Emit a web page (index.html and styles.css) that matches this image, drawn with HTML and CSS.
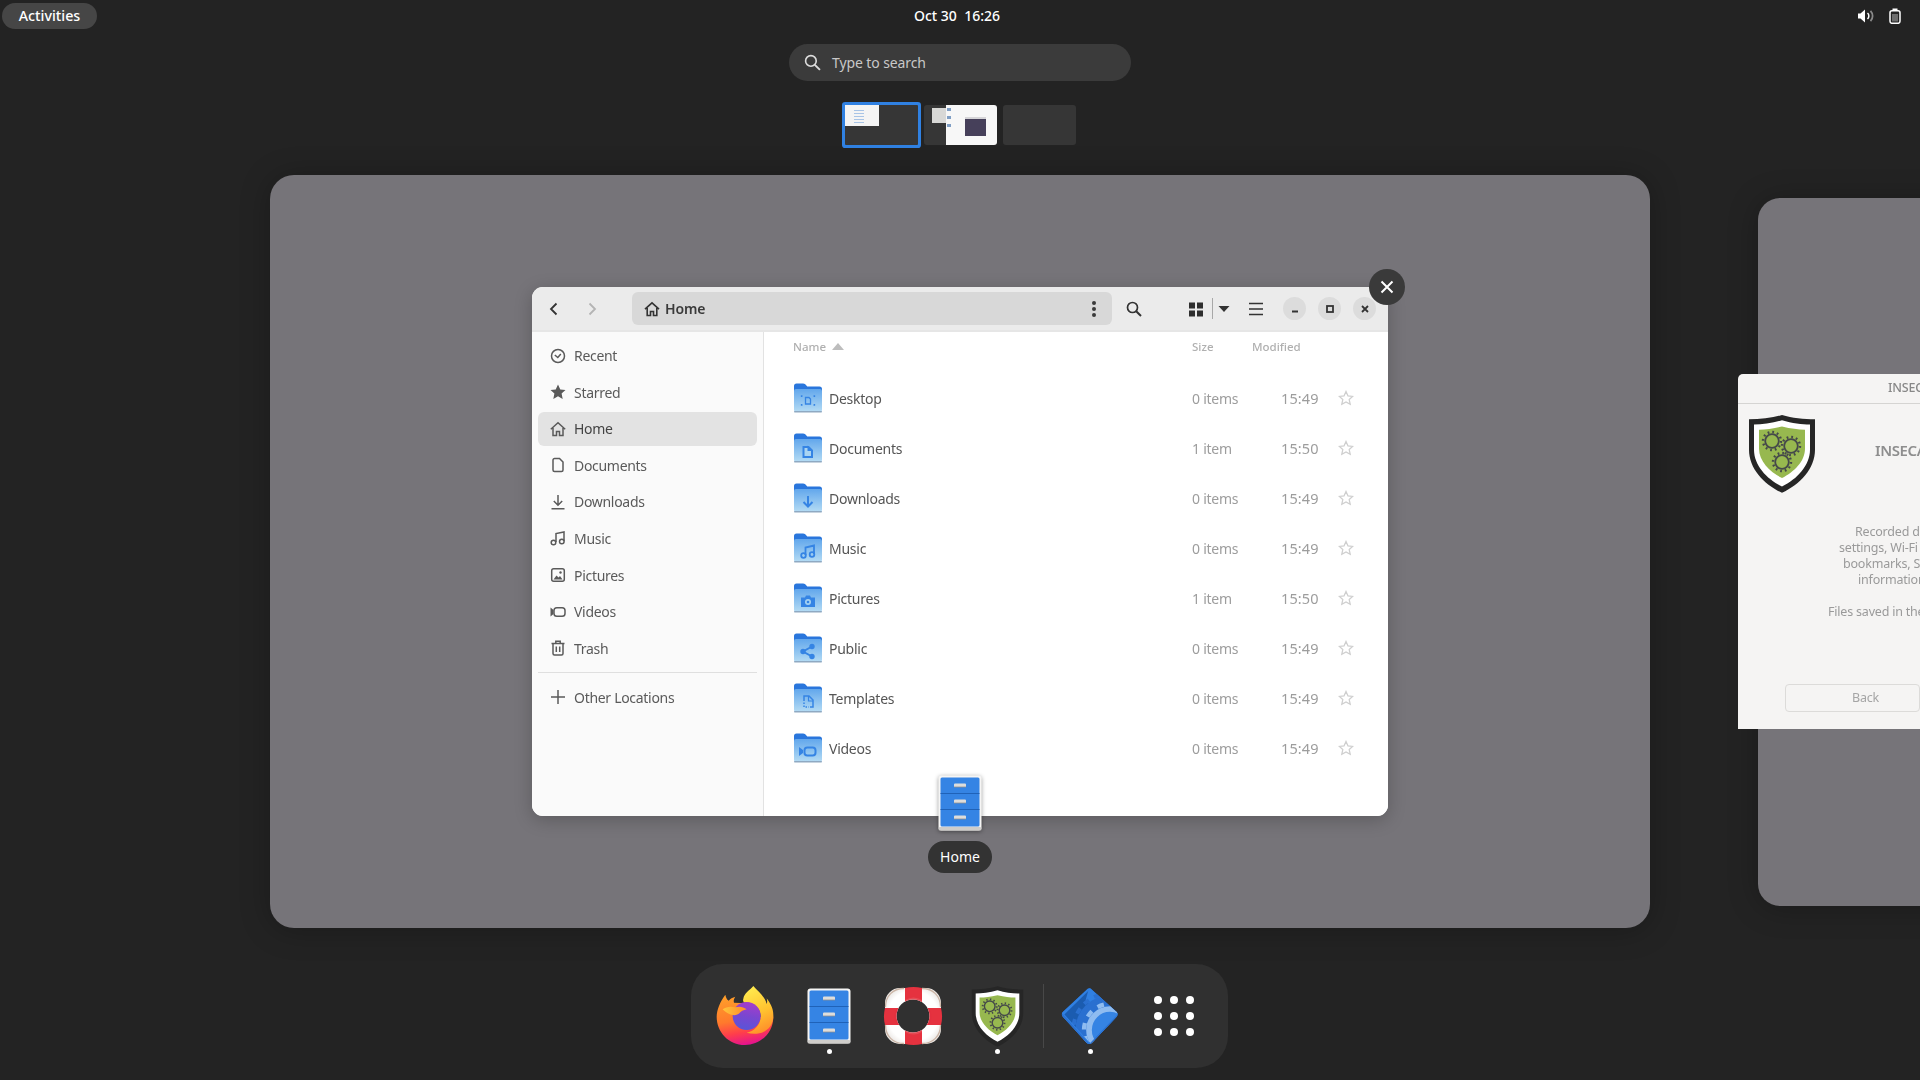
FILE: index.html
```html
<!DOCTYPE html>
<html lang="en">
<head>
<meta charset="utf-8">
<title>Activities overview</title>
<link rel="stylesheet" href="styles.css">
</head>
<body>
<svg class="defs" width="0" height="0" aria-hidden="true">
  <defs>
    <linearGradient id="fbody" x1="0" y1="0" x2="0" y2="1"><stop offset="0" stop-color="#62a7ec"/><stop offset="1" stop-color="#b5dcf4"/></linearGradient>
    <symbol id="folder" viewBox="0 0 32 32">
      <path d="M2 4a2.500 2.500 0 0 1 2.500-2.500h6.500c2 0 2.600 1 3.400 2l.8 1h12.300a2.500 2.500 0 0 1 2.500 2.500v6H2z" fill="#2a76dc"/>
      <rect x="2" y="7" width="28" height="23" rx="2" fill="url(#fbody)"/>
      <rect x="2" y="29" width="28" height="1.500" rx=".7" fill="#8fa9c2"/>
    </symbol>
    <symbol id="shield" viewBox="0 0 68 80">
      <g transform="scale(1 1.050)">
        <path d="M34 1 C44 4 56 5 67 5 V34 C67 52 52 67 34 75 C16 67 1 52 1 34 V5 C12 5 24 4 34 1Z" fill="#262626"/>
        <path d="M34 6 C44 9 54 10 62 10 V34 C62 49 49 62 34 69 C19 62 6 49 6 34 V10 C14 10 24 9 34 6Z" fill="#fff"/>
        <path d="M34 12 C43 14 50 15 57 15 V33 C57 45 46 55 34 61 C22 55 11 45 11 33 V15 C18 15 25 14 34 12Z" fill="#97b84f"/>
      </g>
      <g fill="none" stroke="#45494a">
        <circle cx="24" cy="27" r="6.800" stroke-width="1.800"/><circle cx="24" cy="27" r="9" stroke-width="2.400" stroke-dasharray="1.800 2.910"/>
        <circle cx="43" cy="32" r="6.800" stroke-width="1.800"/><circle cx="43" cy="32" r="9" stroke-width="2.400" stroke-dasharray="1.800 2.910"/>
        <circle cx="34" cy="48" r="6.800" stroke-width="1.800"/><circle cx="34" cy="48" r="9" stroke-width="2.400" stroke-dasharray="1.800 2.910"/>
      </g>
    </symbol>
    <symbol id="drawers" viewBox="0 0 44 56">
      <rect x=".5" y=".5" width="43" height="55" rx="3" fill="#f6f5f4"/>
      <rect x=".5" y="52" width="43" height="3.500" rx="1.500" fill="#cfcdca"/>
      <rect x="2.500" y="2.500" width="39" height="49" rx="1.500" fill="#3584e4"/>
      <path d="M2.500 18.500h39M2.500 34.500h39" stroke="#1f62b8" stroke-width="1"/>
      <path d="M16 12v-2.500a1 1 0 0 1 1-1h10a1 1 0 0 1 1 1V12zM16 28v-2.500a1 1 0 0 1 1-1h10a1 1 0 0 1 1 1V28zM16 44v-2.500a1 1 0 0 1 1-1h10a1 1 0 0 1 1 1V44z" fill="#dedddb"/>
      <path d="M16 12h12M16 28h12M16 44h12" stroke="#8f8f8f" stroke-width=".8"/>
    </symbol>
    <symbol id="star" viewBox="0 0 16 16">
      <path d="M8 1.500l2 4.400 4.700.5-3.500 3.200 1 4.700L8 11.900l-4.200 2.400 1-4.700L1.300 6.400 6 5.900z"/>
    </symbol>
  </defs>
</svg>

<div class="overview">
  <header class="topbar">
    <div class="activities">Activities</div>
    <div class="clock">Oct 30&nbsp;&nbsp;16:26</div>
    <div class="tray">
      <svg class="tray-icon" viewBox="0 0 16 16"><path d="M0 5.500h2.500L7 1.500v13L2.500 10.500H0z" fill="#fff"/><path d="M9.500 5a4 4 0 0 1 0 6" fill="none" stroke="#fff" stroke-width="1.500"/><path d="M12.500 2.800a7.500 7.500 0 0 1 0 10.400" fill="none" stroke="#8a8a8a" stroke-width="1.800"/></svg>
      <svg class="tray-icon" viewBox="0 0 16 16"><rect x="3" y="2.700" width="10" height="12.600" rx="2" fill="none" stroke="#fff" stroke-width="1.500"/><rect x="5.500" y=".5" width="5" height="2" fill="#fff"/><rect x="5" y="6" width="6" height="7.500" fill="#6d6d6d"/></svg>
    </div>
  </header>

  <div class="search">
    <svg class="search-icon" viewBox="0 0 16 16"><circle cx="6.500" cy="6.500" r="5" fill="none" stroke="#ddd" stroke-width="1.500"/><path d="M10.200 10.200L15 15" stroke="#ddd" stroke-width="1.800"/></svg>
    <span>Type to search</span>
  </div>

  <div class="thumbs">
    <div class="thumb active"><div class="mini-win"><i></i><i></i><i></i><i></i><i></i></div></div>
    <div class="thumb second">
      <div class="mini-dialog"></div>
      <div class="mini-page"><div class="mini-rail"><i></i><i></i><i></i></div><div class="mini-dark"></div></div>
    </div>
    <div class="thumb"></div>
  </div>

  <div class="spaces">
    <section class="workspace">
      <div class="window">
        <div class="headerbar">
          <svg class="hb-icon" viewBox="0 0 16 16"><path d="M10.500 2.500L5 8l5.500 5.500" fill="none" stroke="#333" stroke-width="1.800"/></svg>
          <svg class="hb-icon forward" viewBox="0 0 16 16"><path d="M5.500 2.500L11 8l-5.500 5.500" fill="none" stroke="#b4b4b4" stroke-width="1.800"/></svg>
          <div class="pathbar">
            <svg class="path-home" viewBox="0 0 16 16"><path d="M1 8.200L8 1.800l7 6.400M3.200 7v7.500h3.300v-4h3v4h3.300V7" fill="none" stroke="#333" stroke-width="1.600"/></svg>
            <b>Home</b>
            <span class="kebab"><i></i><i></i><i></i></span>
          </div>
          <svg class="hb-icon find" viewBox="0 0 16 16"><circle cx="6.500" cy="6.500" r="5" fill="none" stroke="#333" stroke-width="1.700"/><path d="M10.200 10.200L15 15" stroke="#333" stroke-width="2"/></svg>
          <svg class="hb-icon view" viewBox="0 0 16 16"><path d="M1 1.500h6v6H1zM9 1.500h6v6H9zM1 9.500h6v6H1zM9 9.500h6v6H9z" fill="#2e2e2e"/></svg>
          <span class="hb-sep"></span>
          <svg class="caret" viewBox="0 0 12 8"><path d="M.5 1h11L6 7z" fill="#333"/></svg>
          <svg class="hb-icon burger" viewBox="0 0 16 16"><path d="M1 2.500h14M1 8h14M1 13.500h14" stroke="#333" stroke-width="1.400"/></svg>
          <span class="wm"><svg viewBox="0 0 12 12"><path d="M3 8.500h6" stroke="#333" stroke-width="1.800"/></svg></span>
          <span class="wm"><svg viewBox="0 0 12 12"><rect x="3" y="3" width="6" height="6" fill="none" stroke="#333" stroke-width="1.800"/></svg></span>
          <span class="wm"><svg viewBox="0 0 12 12"><path d="M3 3l6 6M9 3l-6 6" stroke="#333" stroke-width="1.800"/></svg></span>
        </div>
        <div class="winbody">
          <nav class="sidebar">
            <div class="side-row"><svg viewBox="0 0 16 16"><circle cx="8" cy="8" r="6.500"/><path d="M4.800 7l3 2.500 3-3.500"/></svg>Recent</div>
            <div class="side-row"><svg viewBox="0 0 16 16"><path class="fill" d="M8 .5l2.300 5 5.200.6-3.900 3.500 1.100 5.400L8 12.200 3.300 15l1.100-5.400L.5 6.100l5.200-.6z"/></svg>Starred</div>
            <div class="side-row selected"><svg viewBox="0 0 16 16"><path d="M.8 8.200L8 1.800l7.200 6.400M3 7v7.500h3.500v-4h3v4H13V7"/></svg>Home</div>
            <div class="side-row"><svg viewBox="0 0 16 16"><path d="M4.500 1.500h5L13 5v8a1.500 1.500 0 0 1-1.500 1.500h-7A1.500 1.500 0 0 1 3 13V3a1.500 1.500 0 0 1 1.500-1.500z"/></svg>Documents</div>
            <div class="side-row"><svg viewBox="0 0 16 16"><path d="M8 1v10M3.800 7L8 11.200 12.200 7M1.500 14.700h13"/></svg>Downloads</div>
            <div class="side-row"><svg viewBox="0 0 16 16"><path d="M6 12V3.500l8-1.500v9"/><circle cx="3.500" cy="12.500" r="2.300"/><circle cx="11.800" cy="11.500" r="2.300"/></svg>Music</div>
            <div class="side-row"><svg viewBox="0 0 16 16"><rect x="1.700" y="1.700" width="12.600" height="12.600" rx="2"/><path class="fill" d="M3.500 12.500l3-4 2 2 1.500-1.500 2.500 3.500z"/><circle class="fill" cx="10.500" cy="5.500" r="1.200"/></svg>Pictures</div>
            <div class="side-row"><svg viewBox="0 0 16 16"><rect x="4" y="3.700" width="11" height="8.600" rx="2.800"/><path class="fill" d="M.5 3.500l3 2.500v4l-3 2.500z"/></svg>Videos</div>
            <div class="side-row"><svg viewBox="0 0 16 16"><path d="M1.500 3.500h13M5.800 3.500V1.300h4.400v2.200M3 3.500v10a1.500 1.500 0 0 0 1.500 1.500h7a1.500 1.500 0 0 0 1.500-1.500v-10M6.300 6.500v5.500M9.700 6.500v5.500"/></svg>Trash</div>
            <div class="side-sep"></div>
            <div class="side-row"><svg viewBox="0 0 16 16"><path d="M8 1v14M1 8h14"/></svg>Other Locations</div>
          </nav>
          <main class="files">
            <div class="file-head">
              <span class="name-head">Name<svg viewBox="0 0 12 7"><path d="M0 7L6 0l6 7z" fill="#bdbdbd"/></svg></span>
              <span>Size</span>
              <span>Modified</span>
            </div>
            <div class="file-row"><span class="ficon"><svg viewBox="0 0 32 32"><use href="#folder"/><path d="M9.500 15v-1h1M9.500 22v1h1M21.500 14h1v1M22.500 22v1h-1M13.500 15.500h3.500l1.500 1.500v5h-5z" fill="none" stroke="#3584e4" stroke-width="1.300"/></svg></span><span>Desktop</span><span class="dim">0 items</span><span class="time">15:49</span><svg class="star"><use href="#star"/></svg></div>
            <div class="file-row"><span class="ficon"><svg viewBox="0 0 32 32"><use href="#folder"/><path d="M11.500 15h5l3.500 3.500V25h-8.500z" fill="#a9d4f2" stroke="#3584e4" stroke-width="2"/><path d="M15.500 13.500l5.500 5.500h-5.500z" fill="#3584e4"/></svg></span><span>Documents</span><span class="dim">1 item</span><span class="time">15:50</span><svg class="star"><use href="#star"/></svg></div>
            <div class="file-row"><span class="ficon"><svg viewBox="0 0 32 32"><use href="#folder"/><path d="M16 14v10M11.500 20l4.500 4.500 4.500-4.500" fill="none" stroke="#3584e4" stroke-width="2"/></svg></span><span>Downloads</span><span class="dim">0 items</span><span class="time">15:49</span><svg class="star"><use href="#star"/></svg></div>
            <div class="file-row"><span class="ficon"><svg viewBox="0 0 32 32"><use href="#folder"/><path d="M13.500 23v-7.500l8.500-2V22" fill="none" stroke="#3584e4" stroke-width="1.800"/><circle cx="11.500" cy="23.500" r="2.300" fill="none" stroke="#3584e4" stroke-width="1.800"/><circle cx="20" cy="22.500" r="2.300" fill="none" stroke="#3584e4" stroke-width="1.800"/></svg></span><span>Music</span><span class="dim">0 items</span><span class="time">15:49</span><svg class="star"><use href="#star"/></svg></div>
            <div class="file-row"><span class="ficon"><svg viewBox="0 0 32 32"><use href="#folder"/><path d="M9 15.500h4l1-2h4l1 2h4V25H9z" fill="#3584e4"/><circle cx="16" cy="20" r="3" fill="#a5d2f2"/><circle cx="16" cy="20" r="1.300" fill="#3584e4"/></svg></span><span>Pictures</span><span class="dim">1 item</span><span class="time">15:50</span><svg class="star"><use href="#star"/></svg></div>
            <div class="file-row"><span class="ficon"><svg viewBox="0 0 32 32"><use href="#folder"/><path d="M20 14.500L11 19.500l9 5" fill="none" stroke="#3584e4" stroke-width="2"/><circle cx="20" cy="14.500" r="2.700" fill="#3584e4"/><circle cx="11" cy="19.500" r="2.700" fill="#3584e4"/><circle cx="20" cy="24.500" r="2.700" fill="#3584e4"/></svg></span><span>Public</span><span class="dim">0 items</span><span class="time">15:49</span><svg class="star"><use href="#star"/></svg></div>
            <div class="file-row"><span class="ficon"><svg viewBox="0 0 32 32"><use href="#folder"/><path d="M12 19v-5h5l4 4v7h-3" fill="none" stroke="#3584e4" stroke-width="1.500"/><path d="M16.500 14v5h4.500" fill="none" stroke="#3584e4" stroke-width="1.200"/><path d="M12 20.500v4.500h5" fill="none" stroke="#3584e4" stroke-width="1.500" stroke-dasharray="1.500 1.500"/></svg></span><span>Templates</span><span class="dim">0 items</span><span class="time">15:49</span><svg class="star"><use href="#star"/></svg></div>
            <div class="file-row"><span class="ficon"><svg viewBox="0 0 32 32"><use href="#folder"/><rect x="12.500" y="15.500" width="11" height="8" rx="2.800" fill="none" stroke="#3584e4" stroke-width="2"/><path d="M7 15l4 3v3l-4 3z" fill="#3584e4"/></svg></span><span>Videos</span><span class="dim">0 items</span><span class="time">15:49</span><svg class="star"><use href="#star"/></svg></div>
          </main>
        </div>
      </div>
      <div class="win-close"><svg viewBox="0 0 16 16"><path d="M2.500 2.500l11 11M13.500 2.500l-11 11" stroke="#fff" stroke-width="2"/></svg></div>
      <div class="tile"><svg viewBox="0 0 44 56"><use href="#drawers"/></svg></div>
      <div class="tile-label">Home</div>
    </section>

    <section class="workspace peek">
      <div class="dialog">
        <div class="dialog-title">INSECA installer</div>
        <div class="dialog-main">
          <svg class="dialog-shield" viewBox="0 0 68 80"><use href="#shield"/></svg>
          <div class="dialog-text">
            <div class="dialog-head">INSECA</div>
            <div class="para">
              <div class="l1">Recorded data</div>
              <div class="l2">settings, Wi-Fi passwords</div>
              <div class="l3">bookmarks, SSH keys</div>
              <div class="l4">information</div>
            </div>
            <div class="para">
              <div class="l5">Files saved in the</div>
              <div class="l6">Persistent</div>
            </div>
          </div>
        </div>
        <div class="dialog-btn">Back</div>
      </div>
    </section>
  </div>

  <footer class="dock">
    <div class="dock-item">
      <svg class="dock-icon" viewBox="15 18 180 180">
        <defs>
          <linearGradient id="ffa" x1=".3" y1="0" x2=".5" y2="1"><stop offset="0" stop-color="#ff9f2a"/><stop offset=".5" stop-color="#ff7a2c"/><stop offset=".75" stop-color="#ff3f4a"/><stop offset="1" stop-color="#e4128f"/></linearGradient>
          <linearGradient id="ffb" x1=".4" y1="0" x2=".7" y2="1"><stop offset="0" stop-color="#ffe94d"/><stop offset=".55" stop-color="#ffc22f"/><stop offset="1" stop-color="#ff8a2a"/></linearGradient>
          <linearGradient id="ffc" x1=".6" y1="0" x2=".4" y2="1"><stop offset="0" stop-color="#a63ccc"/><stop offset=".5" stop-color="#7a46d0"/><stop offset="1" stop-color="#5855d8"/></linearGradient>
          <linearGradient id="ffd" x1="0" y1="0" x2="1" y2="0"><stop offset="0" stop-color="#ffc53a"/><stop offset="1" stop-color="#ff8a2a"/></linearGradient>
        </defs>
        <path d="M46 44C48 52 50 58 56 62 60 56 68 52 76 50 72 56 70 62 72 68L110 70C135 60 150 90 150 110L190 110C190 160 150 195 105 195 55 195 20 155 20 110 20 90 30 65 46 44Z" fill="url(#ffa)"/>
        <path d="M130 18C120 30 102 40 100 56 98 62 100 66 104 68 130 66 152 85 152 110 152 135 130 155 110 158 150 170 192 150 190 105 190 85 180 68 170 55 172 62 172 68 170 72 165 50 145 35 130 18Z" fill="url(#ffb)"/>
        <circle cx="110" cy="108" r="42" fill="url(#ffc)"/>
        <path d="M38 88C48 80 62 78 76 82 88 78 100 80 110 88 100 90 92 94 88 100 80 108 60 110 38 88Z" fill="url(#ffd)"/>
      </svg>
    </div>
    <div class="dock-item running"><svg class="dock-files" viewBox="0 0 44 56"><use href="#drawers"/></svg></div>
    <div class="dock-item">
      <svg class="dock-icon" viewBox="0 0 60 60">
        <defs>
          <clipPath id="ringclip"><path clip-rule="evenodd" d="M17 2h26a15 15 0 0 1 15 15v26a15 15 0 0 1-15 15H17A15 15 0 0 1 2 43V17A15 15 0 0 1 17 2zM30 13.500a16.500 16.500 0 1 0 0 33 16.500 16.500 0 0 0 0-33z"/></clipPath>
          <radialGradient id="ringshade" cx=".5" cy=".5" r=".7"><stop offset=".6" stop-color="#fff"/><stop offset="1" stop-color="#cfc7c0"/></radialGradient>
        </defs>
        <g clip-path="url(#ringclip)">
          <rect x="0" y="0" width="60" height="60" fill="url(#ringshade)"/>
          <rect x="22" y="0" width="17" height="60" fill="#e64a54"/>
          <rect x="0" y="22" width="60" height="17" fill="#e3303f"/>
        </g>
        <path d="M21 2.500C10 2.500 2.500 10 2.500 21M39 2.500C50 2.500 57.500 10 57.500 21M21 57.500C10 57.500 2.500 50 2.500 39M39 57.500C50 57.500 57.500 50 57.500 39" fill="none" stroke="#cbb5a6" stroke-width="1.300"/>
        <path d="M22 2a12 3 0 0 1 17 0v12a16.500 16.500 0 0 0-17 0zM22 58a12 3 0 0 0 17 0V46a16.500 16.500 0 0 1-17 0zM2 22a3 12 0 0 0 0 17h12a16.500 16.500 0 0 1 0-17zM58 22a3 12 0 0 1 0 17H46a16.500 16.500 0 0 0 0-17z" fill="#e5323f"/>
      </svg>
    </div>
    <div class="dock-item running"><svg class="dock-shield" viewBox="0 0 68 80"><use href="#shield"/></svg></div>
    <div class="dock-sep"></div>
    <div class="dock-item running">
      <svg class="dock-icon" viewBox="15 18 180 180">
        <defs>
          <clipPath id="diamond"><path d="M95 29Q103 21 111 29L184 95Q192 103 184 111L111 188Q103 196 95 188L24 111Q16 103 24 95Z"/></clipPath>
        </defs>
        <g clip-path="url(#diamond)">
          <rect x="0" y="0" width="210" height="210" fill="#1b5cb0"/>
          <path d="M103 20L195 103 165 150 92 60Z" fill="#3080e2"/>
          <circle cx="165" cy="150" r="104" fill="#2a70d0"/>
          <circle cx="165" cy="150" r="110" fill="none" stroke="#2a70d0" stroke-width="12" stroke-dasharray="18 18"/>
          <circle cx="165" cy="150" r="78" fill="none" stroke="#8fbcf0" stroke-width="13" stroke-dasharray="20 20.800"/>
          <circle cx="165" cy="150" r="63" fill="#3584e4" stroke="#8fbcf0" stroke-width="17"/>
          <path d="M103 21L20 103 103 196" fill="none" stroke="#3080e2" stroke-width="12"/>
          <path d="M20 103L103 196 192 103" fill="none" stroke="#2a70d0" stroke-width="6"/>
        </g>
      </svg>
    </div>
    <div class="dock-item">
      <svg class="dock-grid" viewBox="0 0 40 40"><g fill="#fff"><circle cx="4" cy="4" r="4"/><circle cx="20" cy="4" r="4"/><circle cx="36" cy="4" r="4"/><circle cx="4" cy="20" r="4"/><circle cx="20" cy="20" r="4"/><circle cx="36" cy="20" r="4"/><circle cx="4" cy="36" r="4"/><circle cx="20" cy="36" r="4"/><circle cx="36" cy="36" r="4"/></g></svg>
    </div>
  </footer>
</div>
</body>
</html>
```
FILE: styles.css
```css
* { box-sizing: border-box; }
html, body { margin: 0; height: 100%; }
body {
  width: 1920px;
  height: 1080px;
  overflow: hidden;
  background: #232323;
  color: #fff;
  font-family: "Noto Sans", "Liberation Sans", sans-serif;
  font-size: 14px;
}
.defs { position: absolute; }
.overview { display: flex; flex-direction: column; height: 1080px; }

/* top bar */
.topbar {
  display: grid;
  grid-template-columns: 1fr auto 1fr;
  align-items: center;
  height: 32px;
  padding: 0 8px 0 2px;
}
.activities {
  justify-self: start;
  width: 95px;
  height: 26px;
  line-height: 25px;
  text-align: center;
  background: #464646;
  border-radius: 13px;
  font-size: 14.300px;
  font-weight: 500;
}
.clock { font-weight: 500; font-size: 14px; line-height: 30px; height: 30px; }
.tray { justify-self: end; display: flex; gap: 13px; align-items: center; padding-right: 9px; }
.tray-icon { width: 16px; height: 16px; }

/* search */
.search {
  align-self: center;
  display: flex;
  align-items: center;
  gap: 11px;
  width: 342px;
  height: 37px;
  margin-top: 12px;
  padding-left: 15px;
  background: #3b3b3b;
  border-radius: 18.500px;
  color: #c8c8c8;
  letter-spacing: -.1px;
}
.search-icon { width: 17px; height: 17px; }

/* workspace thumbnails */
.thumbs { display: flex; justify-content: center; gap: 6px; margin-top: 24px; }
.thumb {
  position: relative;
  width: 73px;
  height: 40px;
  background: #363636;
  border-radius: 3px;
  overflow: hidden;
}
.thumb.active { overflow: visible; box-shadow: 0 0 0 3px #3081e2; border-radius: 1px; }
.mini-win { width: 34px; height: 21px; background: #f4f4f4; padding: 5px 2px 0 9px; }
.mini-win i { display: block; width: 10px; height: 1px; margin-bottom: 2px; background: #a8c4e6; }
.mini-dialog { position: absolute; left: 8px; top: 3px; width: 14px; height: 15px; background: #d8d8d6; }
.mini-page { position: absolute; left: 22px; top: 0; width: 51px; height: 40px; background: #f7f7f7; }
.mini-rail { position: absolute; left: 1px; top: 3px; width: 4px; display: flex; flex-direction: column; gap: 5px; }
.mini-rail i { display: block; height: 3px; background: #7f9ec4; }
.mini-dark { position: absolute; left: 19px; top: 12px; width: 21px; height: 19px; background: linear-gradient(#d6d5d8 0 2px, #46405a 2px); }

/* workspaces */
.spaces { display: flex; align-items: flex-start; margin-top: 30px; height: 753px; }
.workspace {
  position: relative;
  flex: none;
  width: 1380px;
  height: 753px;
  margin-left: 270px;
  background: #767479;
  border-radius: 24px;
  box-shadow: 0 2px 30px rgba(0,0,0,.25);
}
.workspace.peek {
  width: 400px;
  height: 708px;
  margin-left: 108px;
  margin-top: 23px;
  border-radius: 22px;
}

/* file manager window */
.window {
  position: absolute;
  left: 262px;
  top: 112px;
  width: 856px;
  height: 529px;
  display: flex;
  flex-direction: column;
  border-radius: 11px;
  overflow: hidden;
  background: #fff;
  color: #555;
  filter: blur(.3px);
  box-shadow: 0 4px 18px rgba(0,0,0,.22);
}
.headerbar {
  flex: none;
  display: flex;
  align-items: center;
  height: 45px;
  background: #ebebeb;
  border-bottom: 2px solid #e6e6e6;
}
.hb-icon { flex: none; width: 16px; height: 16px; }
.headerbar > .hb-icon:first-child { margin-left: 14px; }
.forward { margin-left: 22px; }
.pathbar {
  flex: none;
  display: flex;
  align-items: center;
  width: 480px;
  height: 33px;
  margin-left: 32px;
  padding: 0 16px 0 12px;
  background: #d8d8d8;
  border-radius: 6px;
  color: #3a3a3a;
}
.pathbar b { font-weight: 600; font-size: 14px; margin-left: 5px; letter-spacing: -.1px; }
.path-home { width: 16px; height: 16px; }
.kebab { display: flex; flex-direction: column; gap: 2px; margin-left: auto; }
.kebab i { width: 4px; height: 4px; border-radius: 50%; background: #3a3a3a; }
.find { margin-left: 14px; }
.view { margin-left: 46px; }
.hb-sep { width: 1px; height: 21px; margin-left: 8px; background: #a8a8a8; }
.caret { width: 12px; height: 8px; margin-left: 5px; }
.burger { margin-left: 18px; }
.wm {
  flex: none;
  display: grid;
  place-items: center;
  width: 23px;
  height: 23px;
  margin-left: 12px;
  background: #dcdcdc;
  border-radius: 50%;
}
.burger + .wm { margin-left: 19px; }
.wm svg { width: 12px; height: 12px; }

.winbody { flex: 1; display: flex; min-height: 0; }
.sidebar {
  flex: none;
  width: 232px;
  padding: 6.500px 6px 0;
  background: #fafafa;
  border-right: 1px solid #e2e2e2;
  letter-spacing: -.3px;
}
.side-row {
  display: flex;
  align-items: center;
  gap: 8px;
  height: 34px;
  margin-bottom: 2.600px;
  padding-left: 12px;
  border-radius: 6px;
  color: #5a5a5a;
}
.side-row svg { flex: none; width: 16px; height: 16px; fill: none; stroke: #5a5a5a; stroke-width: 1.500; }
.side-row svg .fill { fill: #5a5a5a; stroke: none; }
.side-row.selected { background: #e3e3e3; color: #444; }
.side-sep { height: 1px; margin: 7px 0 7px; background: #dfdfdf; }

/* list */
.files { flex: 1; min-width: 0; padding: 0 15px 0 28px; background: #fff; }
.file-head {
  display: grid;
  grid-template-columns: 400px 60px 1fr;
  align-items: center;
  height: 29px;
  margin-bottom: 12px;
  font-size: 11.500px;
  font-weight: 500;
  color: #b0b0b0;
}
.name-head { padding-left: 1px; display: flex; align-items: center; gap: 6px; }
.name-head svg { width: 12px; height: 7px; }
.file-row {
  display: grid;
  grid-template-columns: 37px 363px 90px 37px 54px;
  align-items: center;
  height: 50px;
  color: #555;
  letter-spacing: -.25px;
}
.ficon, .ficon svg { display: block; width: 32px; height: 32px; }
.dim { color: #9d9d9d; white-space: nowrap; }
.time { color: #9d9d9d; font-size: 14.500px; margin-left: -1px; white-space: nowrap; letter-spacing: .1px; }
.star { justify-self: center; width: 16px; height: 16px; fill: none; stroke: #cfcfcf; stroke-width: 1.300; }

/* overlays on the window */
.win-close {
  position: absolute;
  left: 1099px;
  top: 94px;
  width: 36px;
  height: 36px;
  display: grid;
  place-items: center;
  border-radius: 50%;
  background: #3a3a3a;
}
.win-close svg { width: 16px; height: 16px; }
.tile {
  position: absolute;
  left: 668px;
  top: 600px;
  width: 44px;
  height: 56px;
  filter: drop-shadow(0 1px 2px rgba(0,0,0,.4));
}
.tile svg { display: block; width: 44px; height: 56px; }
.tile-label {
  position: absolute;
  left: 658px;
  top: 666px;
  width: 64px;
  height: 32px;
  line-height: 31px;
  text-align: center;
  background: #333;
  border-radius: 16px;
}

/* second window */
.dialog {
  position: absolute;
  left: -20px;
  top: 176px;
  width: 300px;
  height: 355px;
  background: #f5f4f3;
  border-radius: 5px 5px 0 0;
  color: #9a9a9a;
  filter: blur(.25px);
  font-size: 12.500px;
  letter-spacing: -.2px;
}
.dialog-title {
  height: 30px;
  line-height: 28px;
  padding-left: 150px;
  border-bottom: 1px solid #d5d4d2;
  white-space: nowrap;
  font-size: 12.500px;
  font-weight: 500;
  color: #888;
}
.dialog-main { display: flex; padding: 10px 0 0 10px; }
.dialog-shield { flex: none; width: 68px; height: 80px; }
.dialog-text { flex: none; white-space: nowrap; line-height: 16px; }
.dialog-head { margin: 27px 0 0 59px; height: 18px; line-height: 18px; font-size: 15px; font-weight: 600; color: #8e8e8e; letter-spacing: -.4px; }
.para { margin-top: 65px; }
.para + .para { margin-top: 16px; }
.l1 { margin-left: 39px; }
.l2 { margin-left: 23px; }
.l3 { margin-left: 27px; }
.l4 { margin-left: 42px; }
.l5 { margin-left: 12px; }
.l6 { margin-left: 103px; }
.dialog-btn {
  position: absolute;
  left: 47px;
  top: 310px;
  width: 135px;
  height: 28px;
  line-height: 26px;
  padding-left: 26px;
  text-align: center;
  border: 1px solid #dcdbd9;
  border-radius: 4px;
  font-size: 12.500px;
  color: #a5a5a5;
}

/* dock */
.dock {
  align-self: flex-start;
  display: flex;
  align-items: center;
  width: 537px;
  height: 104px;
  margin: 36px 0 0 691px;
  padding: 0 12px;
  background: #303030;
  border-radius: 32px;
}
.dock-item {
  position: relative;
  flex: none;
  display: grid;
  place-items: center;
  width: 84px;
  height: 104px;
}
.dock-icon { width: 60px; height: 60px; }
.dock-files { width: 44px; height: 56px; }
.dock-shield { width: 53px; height: 63px; }
.dock-grid { width: 40px; height: 40px; }
.dock-item.running::after {
  content: "";
  position: absolute;
  left: 39.500px;
  bottom: 14px;
  width: 5px;
  height: 5px;
  border-radius: 50%;
  background: #fff;
}
.dock-sep { flex: none; width: 1px; height: 64px; margin: 0 4px; background: #484848; }
```
